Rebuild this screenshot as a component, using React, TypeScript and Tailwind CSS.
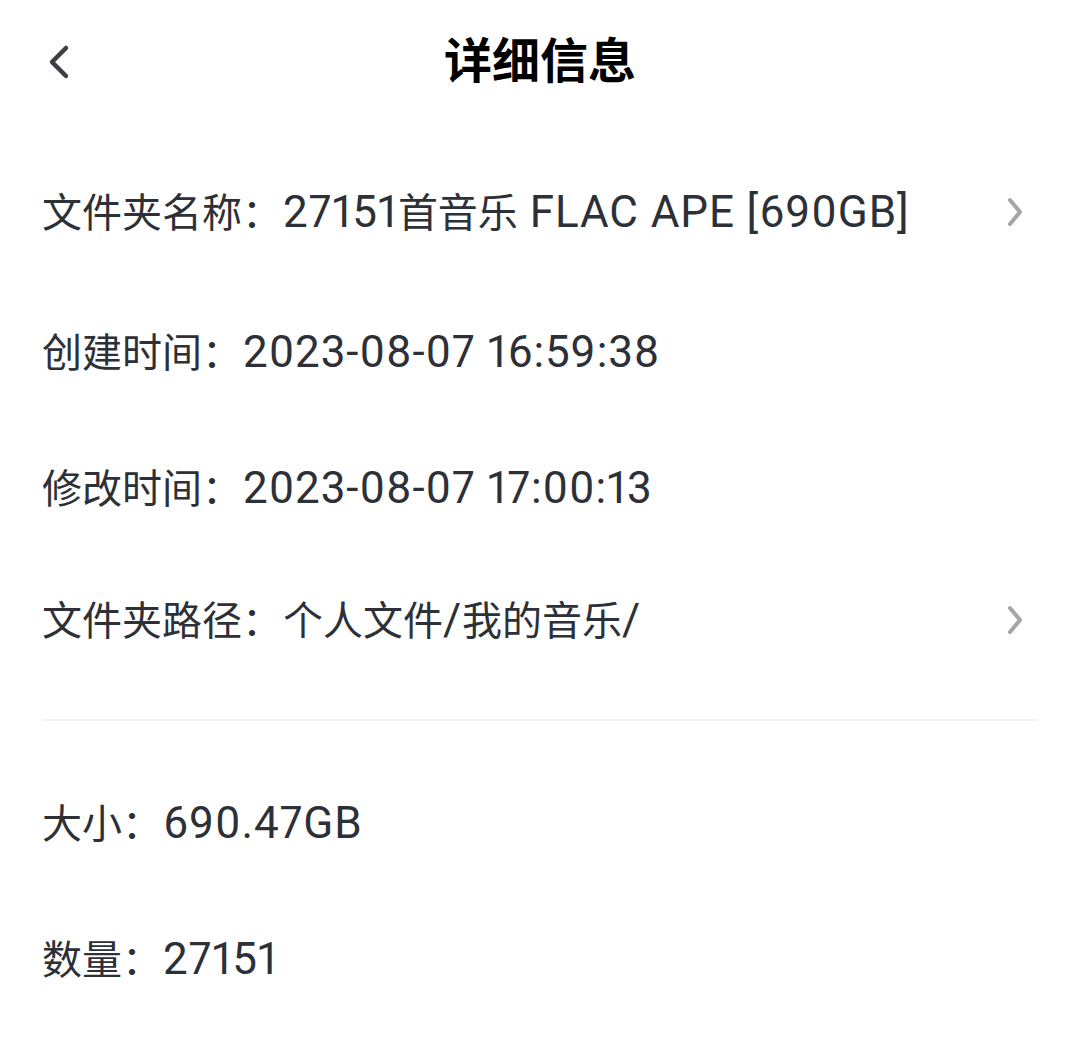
import React from 'react';

// 返回箭头
const BackIcon = () => (
  <svg width="30" height="40" viewBox="0 0 30 40" fill="none">
    <path d="M22 6 L8 20 L22 34" stroke="#3b3e45" strokeWidth="4.5" strokeLinecap="round" strokeLinejoin="round" />
  </svg>
);

const ChevronRight = () => (
  <svg width="22" height="34" viewBox="0 0 22 34" fill="none">
    <path d="M6 5 L16 17 L6 29" stroke="#a3a5aa" strokeWidth="4" strokeLinecap="round" strokeLinejoin="round" />
  </svg>
);

// 中文用 40px，数字和字母稍大一些
const Value = ({ text }: { text: string }) => {
  const parts = text.split(/([\u4e00-\u9fff]+)/).filter(Boolean);
  return (
    <span className="ml-[1px]">
      {parts.map((p, i) =>
        /[\u4e00-\u9fff]/.test(p) ? (
          <span key={i} className="text-[40px]">{p}</span>
        ) : (
          <span key={i} className="text-[44px] tracking-[0.9px] proportional-nums">{p}</span>
        )
      )}
    </span>
  );
};

const InfoRow = ({
  label,
  value,
  arrow = false,
  className = '',
}: {
  label: string;
  value: string;
  arrow?: boolean;
  className?: string;
}) => (
  <div className={`h-[136px] flex items-center justify-between ${className}`}>
    <div className="flex items-baseline leading-none text-[#2d3037] whitespace-nowrap">
      <span className="text-[40px]">{label}：</span>
      <Value text={value} />
    </div>
    {arrow && (
      <div className="mr-[12px]">
        <ChevronRight />
      </div>
    )}
  </div>
);

export default function App() {
  return (
    <div
      className="w-[1080px] h-[1064px] bg-white overflow-hidden"
      style={{ fontFamily: 'Roboto, "Noto Sans CJK SC", sans-serif' }}
    >
      <div className="h-[124px] relative flex items-center justify-center">
        <div className="absolute left-[44px] top-[42px]">
          <BackIcon />
        </div>
        <h1 className="text-[48px] font-bold text-black leading-none">详细信息</h1>
      </div>

      <div className="pt-[20px] px-[42px]">
        <InfoRow label="文件夹名称" value="27151首音乐 FLAC APE [690GB]" arrow />
        <InfoRow label="创建时间" value="2023-08-07 16:59:38" className="mt-[4px]" />
        <InfoRow label="修改时间" value="2023-08-07 17:00:13" />
        <InfoRow label="文件夹路径" value="个人文件/我的音乐/" arrow className="-mt-[4px]" />

        <div className="mt-[31px] mb-[34px] h-[2px] bg-[#f0f1f4]" />

        <InfoRow label="大小" value="690.47GB" />
        <InfoRow label="数量" value="27151" />
      </div>
    </div>
  );
}
